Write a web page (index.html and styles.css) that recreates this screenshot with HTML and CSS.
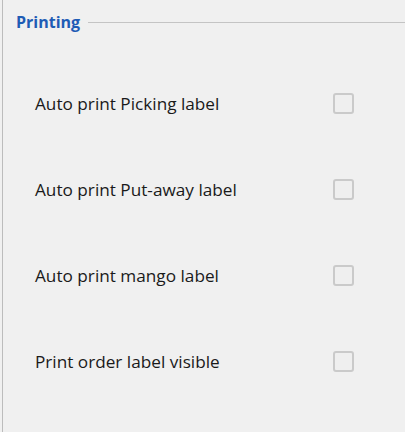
FILE: index.html
```html
<!DOCTYPE html>
<html>
<head>
<meta charset="utf-8">
<link rel="stylesheet" href="styles.css">
</head>
<body>
<div class="group">
  <div class="legend">
    <span class="legend-title">Printing</span>
    <span class="legend-line"></span>
  </div>
  <div class="rows">
    <div class="row"><span class="label">Auto print Picking label</span><span class="check"></span></div>
    <div class="row"><span class="label">Auto print Put-away label</span><span class="check"></span></div>
    <div class="row"><span class="label">Auto print mango label</span><span class="check"></span></div>
    <div class="row"><span class="label">Print order label visible</span><span class="check"></span></div>
  </div>
</div>
</body>
</html>
```

FILE: styles.css
```css
html, body {
  margin: 0;
  padding: 0;
  background: #f0f0f0;
}
body {
  width: 405px;
  height: 432px;
  overflow: hidden;
  font-family: "Open Sans", "Liberation Sans", sans-serif;
}
.group {
  margin-left: 2px;
  border-left: 1px solid #bcbcbc;
  height: 432px;
  box-sizing: border-box;
}
.legend {
  display: flex;
  align-items: center;
  height: 44px;
  padding-left: 13px;
}
.legend-title {
  font-size: 16px;
  font-weight: 700;
  color: #1f5cb5;
}
.legend-line {
  flex: 1;
  height: 1px;
  margin-left: 8px;
  background: #c4c4c4;
}
.rows {
  padding-top: 16px;
}
.row {
  display: grid;
  grid-template-columns: 298px 21px;
  align-items: center;
  height: 86px;
  padding-left: 32px;
}
.label {
  font-size: 17.2px;
  color: #1a1a1a;
}
.check {
  width: 21px;
  height: 21px;
  box-sizing: border-box;
  border: 2px solid #cacaca;
  border-radius: 3px;
  background: #efefef;
}
```
